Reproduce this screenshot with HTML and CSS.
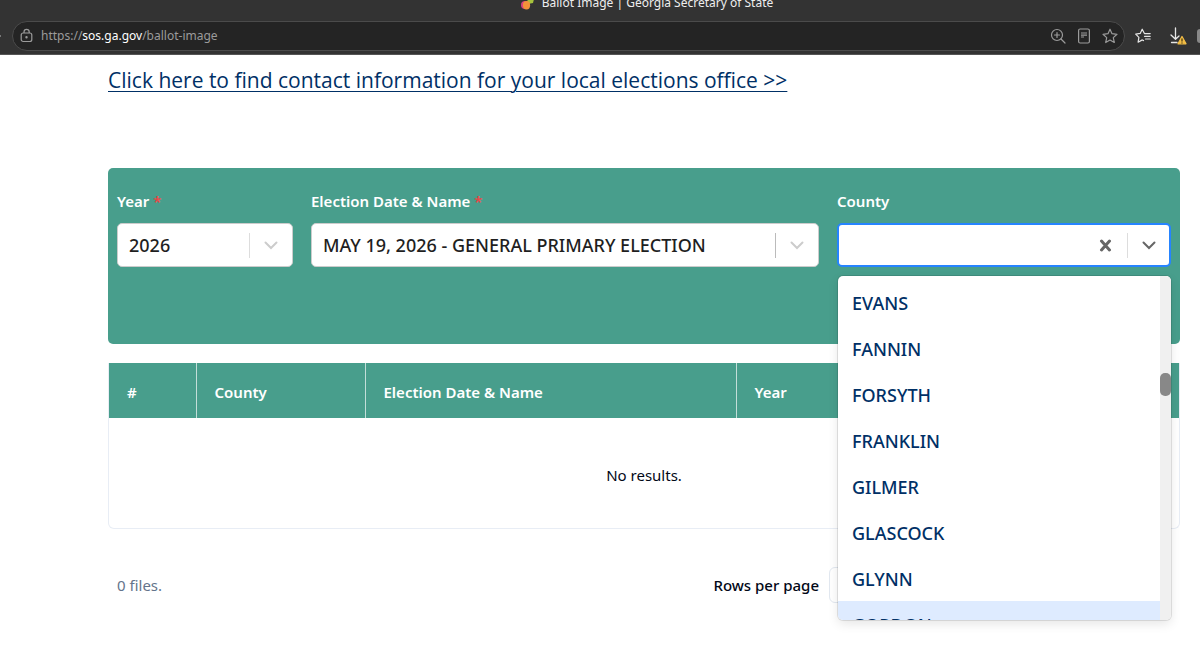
FILE: index.html
```html
<!DOCTYPE html>
<html lang="en">
<head>
<meta charset="utf-8">
<title>Ballot Image | Georgia Secretary of State</title>
<link rel="stylesheet" href="styles.css">
</head>
<body>
<header class="browser">
  <div class="titlebar">
    <svg class="favicon" width="14" height="14" viewBox="0 0 14 14" aria-hidden="true"><path d="M6 6l3-3 5 0-1 4-5 1z" fill="#a6c23c"/><ellipse cx="5" cy="9" rx="4" ry="4" fill="#d9407e"/><ellipse cx="6.500" cy="9.300" rx="3.600" ry="4.200" fill="#f3913a"/></svg>
    <span class="tab-title">Ballot Image | Georgia Secretary of State</span>
  </div>
  <div class="toolbar">
    <span class="edge-dot"></span>
    <div class="address">
      <svg width="14" height="16" viewBox="0 0 14 16" fill="none" stroke="#9b9b9b" stroke-width="1.200" aria-hidden="true"><rect x="1.200" y="5" width="10.600" height="8.500" rx="2"/><path d="M4 5V4a2.600 2.600 0 0 1 5.200 0v1"/><circle cx="6.500" cy="9.300" r=".6" fill="#9b9b9b"/></svg>
      <span class="url">https://<b>sos.ga.gov</b>/ballot-image</span>
      <div class="address-tools">
        <button class="tool" aria-label="Zoom"><svg width="16" height="16" viewBox="0 0 16 16" fill="none" stroke="#9b9b9b" stroke-width="1.200" stroke-linecap="round"><circle cx="7" cy="7" r="5.500"/><path d="M11 11l4 4M4.500 7h5M7 4.500v5"/></svg></button>
        <button class="tool" aria-label="Reading view"><svg width="16" height="16" viewBox="0 0 16 16" fill="none" stroke="#9b9b9b" stroke-width="1.200"><rect x="2.600" y="1" width="10.800" height="14" rx="1.500"/><path d="M5 5h6M5 7.200h6M5 9h3"/></svg></button>
        <button class="tool" aria-label="Add to favorites"><svg width="16" height="16" viewBox="0 0 16 16" fill="none" stroke="#9b9b9b" stroke-width="1.200" stroke-linejoin="round"><path d="M8 1.200l2 4.500 5 .6-3.700 3.300 1 4.900L8 12l-4.300 2.500 1-4.900L1 6.300l5-.6z"/></svg></button>
      </div>
    </div>
    <button class="tool" aria-label="Favorites"><svg width="16" height="16" viewBox="0 0 16 16" fill="none" stroke="#e6e6e6" stroke-width="1.200" stroke-linecap="round" stroke-linejoin="round"><path d="M9.300 5.200L7.200 1.200 5.200 5.400l-4.500.7 3.200 3.200-.8 4.900 4.200-2.300 1.200.7M9.500 5.600h5.700M9.500 8.300h5.700M10.500 11h4.700"/></svg></button>
    <button class="tool" aria-label="Downloads"><svg width="18" height="18" viewBox="0 0 18 18" fill="none" stroke="#e6e6e6" stroke-width="1.300" stroke-linecap="round" stroke-linejoin="round"><path d="M6.500 1v11M2 8l4.500 4.300L10 9M2.500 15.500H8"/><path d="M13 9.500l4 7.300H9z" fill="#f2bd45" stroke="#f2bd45"/><path d="M13 12v2M13 16v.1" stroke="#4a3a12"/></svg></button>
    <span class="profile"></span>
  </div>
</header>

<main class="page">
  <a class="contact" href="#">Click here to find contact information for your local elections office &gt;&gt;</a>

  <form class="filters">
    <div class="field">
      <label for="year">Year <span class="required">*</span></label>
      <div class="control">
        <select id="year"><option>2026</option></select>
        <span class="indicator"><svg width="14" height="9" viewBox="0 0 14 9"><path d="M1.500 1.500L7 7l5.500-5.500"/></svg></span>
      </div>
    </div>
    <div class="field">
      <label for="election">Election Date &amp; Name <span class="required">*</span></label>
      <div class="control strong">
        <select id="election"><option>MAY 19, 2026 - GENERAL PRIMARY ELECTION</option></select>
        <span class="indicator"><svg width="14" height="9" viewBox="0 0 14 9"><path d="M1.500 1.500L7 7l5.500-5.500"/></svg></span>
      </div>
    </div>
    <div class="field">
      <label for="county">County</label>
      <div class="control active">
        <input id="county" type="text" role="combobox" aria-expanded="true" aria-controls="counties" autocomplete="off">
        <button type="button" class="clear" aria-label="Clear county"><svg width="13" height="13" viewBox="0 0 13 13"><path d="M2.500 2l8 9M10.500 2l-8 9"/></svg></button>
        <button type="button" class="indicator" aria-label="Show counties"><svg width="14" height="9" viewBox="0 0 14 9"><path d="M1.500 1.500L7 7l5.500-5.500"/></svg></button>
        <div class="menu">
          <ul id="counties" class="options" role="listbox" aria-label="County">
            <li role="option">EVANS</li>
            <li role="option">FANNIN</li>
            <li role="option">FORSYTH</li>
            <li role="option">FRANKLIN</li>
            <li role="option">GILMER</li>
            <li role="option">GLASCOCK</li>
            <li role="option">GLYNN</li>
            <li role="option" class="focused">GORDON</li>
          </ul>
          <div class="track"><div class="thumb"></div></div>
        </div>
      </div>
    </div>
  </form>

  <div class="results">
    <table>
      <colgroup><col class="c-num"><col class="c-county"><col class="c-name"><col class="c-year"><col></colgroup>
      <thead><tr><th>#</th><th>County</th><th>Election Date &amp; Name</th><th>Year</th><th></th></tr></thead>
      <tbody><tr><td colspan="5">No results.</td></tr></tbody>
    </table>
  </div>

  <div class="footer">
    <span class="count">0 files.</span>
    <label for="rows">Rows per page</label>
    <select id="rows" class="rows"><option></option></select>
  </div>
</main>
</body>
</html>
```
FILE: styles.css
```css
* { box-sizing: border-box; }
body {
  margin: 0;
  background: #fff;
  color: #020817;
  font: 16px/24px "Noto Sans", "Open Sans", sans-serif;
}
button, input, select { font: inherit; color: inherit; }
button { border: 0; padding: 0; background: none; }
svg { display: block; }

/* Browser chrome */
.browser {
  height: 55px;
  overflow: hidden;
  background: #333;
  border-bottom: 1px solid #555;
}
.titlebar {
  display: flex;
  align-items: center;
  justify-content: center;
  gap: 8px;
  height: 20px;
  margin-top: -7px;
  padding-left: 93px;
  color: #eee;
  font-size: 12px;
}
.tab-title { white-space: nowrap; }
.toolbar {
  display: flex;
  align-items: center;
  gap: 18px;
  margin-top: 8px;
}
.edge-dot {
  width: 1px;
  height: 2px;
  margin-right: -7px;
  background: #777;
}
.toolbar .address {
  flex: 1;
  display: flex;
  align-items: center;
  gap: 7px;
  height: 30px;
  margin-right: -8px;
  padding: 0 6px 0 7px;
  border: 1px solid #4b4b4b;
  border-radius: 15px;
  background: #242424;
}
.url { flex: 1; color: #9b9b9b; font-size: 12px; line-height: 20px; }
.url b { color: #fff; font-weight: 400; }
.address-tools { display: flex; gap: 10px; }
.profile {
  width: 3px;
  height: 14px;
  margin-left: -8px;
  border-radius: 7px 0 0 7px;
  background: #888;
}

/* Page */
.page { padding: 10px 20px 40px 108px; }
.contact {
  display: block;
  color: #003066;
  font-family: "Open Sans", sans-serif;
  font-size: 21px;
  line-height: 30px;
  text-decoration-thickness: 1px;
  text-underline-offset: 3px;
}
.filters {
  display: grid;
  grid-template-columns: minmax(0, 176fr) minmax(0, 508fr) minmax(0, 334fr);
  gap: 18px;
  min-height: 176px;
  margin-top: 73px;
  padding: 21px 9px;
  border-radius: 5px;
  background: #489e8c;
}
.field label {
  display: block;
  margin-bottom: 10px;
  color: #fff;
  font-size: 15px;
  font-weight: 600;
}
.required { color: #ef4444; }
.control {
  position: relative;
  display: flex;
  align-items: center;
  height: 44px;
  border: 1px solid #ccc;
  border-radius: 5px;
  background: #fff;
  color: #1f1f1f;
  font-size: 18px;
  font-weight: 500;
}
.control select, .control input {
  flex: 1;
  min-width: 0;
  height: 100%;
  padding: 0 11px;
  border: 0;
  outline: 0;
  appearance: none;
  background: transparent;
}
.indicator {
  display: flex;
  align-items: center;
  justify-content: center;
  width: 43px;
  height: 25px;
  border-left: 1px solid #ddd;
}
.strong .indicator { border-color: #bbb; }
.indicator svg, .clear svg {
  fill: none;
  stroke: #ccc;
  stroke-width: 2;
  stroke-linecap: round;
}
.active { border: 2px solid #2684ff; }
.active .indicator svg, .clear svg { stroke: #666; }
.clear { padding: 0 15px; }
.active .clear svg { stroke-width: 3; }
.active .indicator { width: 42px; }

.menu {
  position: absolute;
  z-index: 1;
  top: calc(100% + 11px);
  left: -1px;
  right: -2px;
  display: flex;
  height: 344px;
  overflow: hidden;
  border-radius: 5px;
  background: #fff;
  box-shadow: 0 0 0 1px rgba(0, 0, 0, .1), 0 4px 11px rgba(0, 0, 0, .1);
}
.options {
  flex: 1;
  margin: 0;
  padding: 3px 0 0;
  list-style: none;
  overflow: hidden;
  color: #003066;
}
.options li { height: 46px; padding: 12px 14px 10px; }
.focused { background: #deebff; }
.track { width: 11px; padding-top: 97px; background: #f0f0f0; }
.thumb { height: 23px; border-radius: 5px; background: #888; }

.results {
  margin-top: 19px;
  overflow: hidden;
  border: 1px solid #e8edf5;
  border-top: 0;
  border-radius: 0 0 6px 6px;
}
table { width: 100%; border-collapse: collapse; table-layout: fixed; }
.c-num { width: 87px; }
.c-county { width: 169px; }
.c-name { width: 371px; }
.c-year { width: 169px; }
th {
  height: 55px;
  padding: 3px 18px 0;
  border-right: 1px solid #c3ded9;
  background: #489e8c;
  color: #fff;
  font-size: 15px;
  font-weight: 600;
  text-align: left;
}
th:last-child { border-right: 0; }
td { height: 110px; padding: 4px 0 0; font-size: 15px; text-align: center; }

.footer {
  display: flex;
  align-items: center;
  gap: 10px;
  margin-top: 38px;
  padding: 0 9px;
  font-size: 15px;
}
.count { flex: 1; color: #64748b; }
.footer label { font-weight: 500; }
.rows {
  width: 342px;
  max-width: 50%;
  height: 36px;
  border: 1px solid #e2e8f0;
  border-radius: 6px;
  appearance: none;
  background: #fff;
}
```
